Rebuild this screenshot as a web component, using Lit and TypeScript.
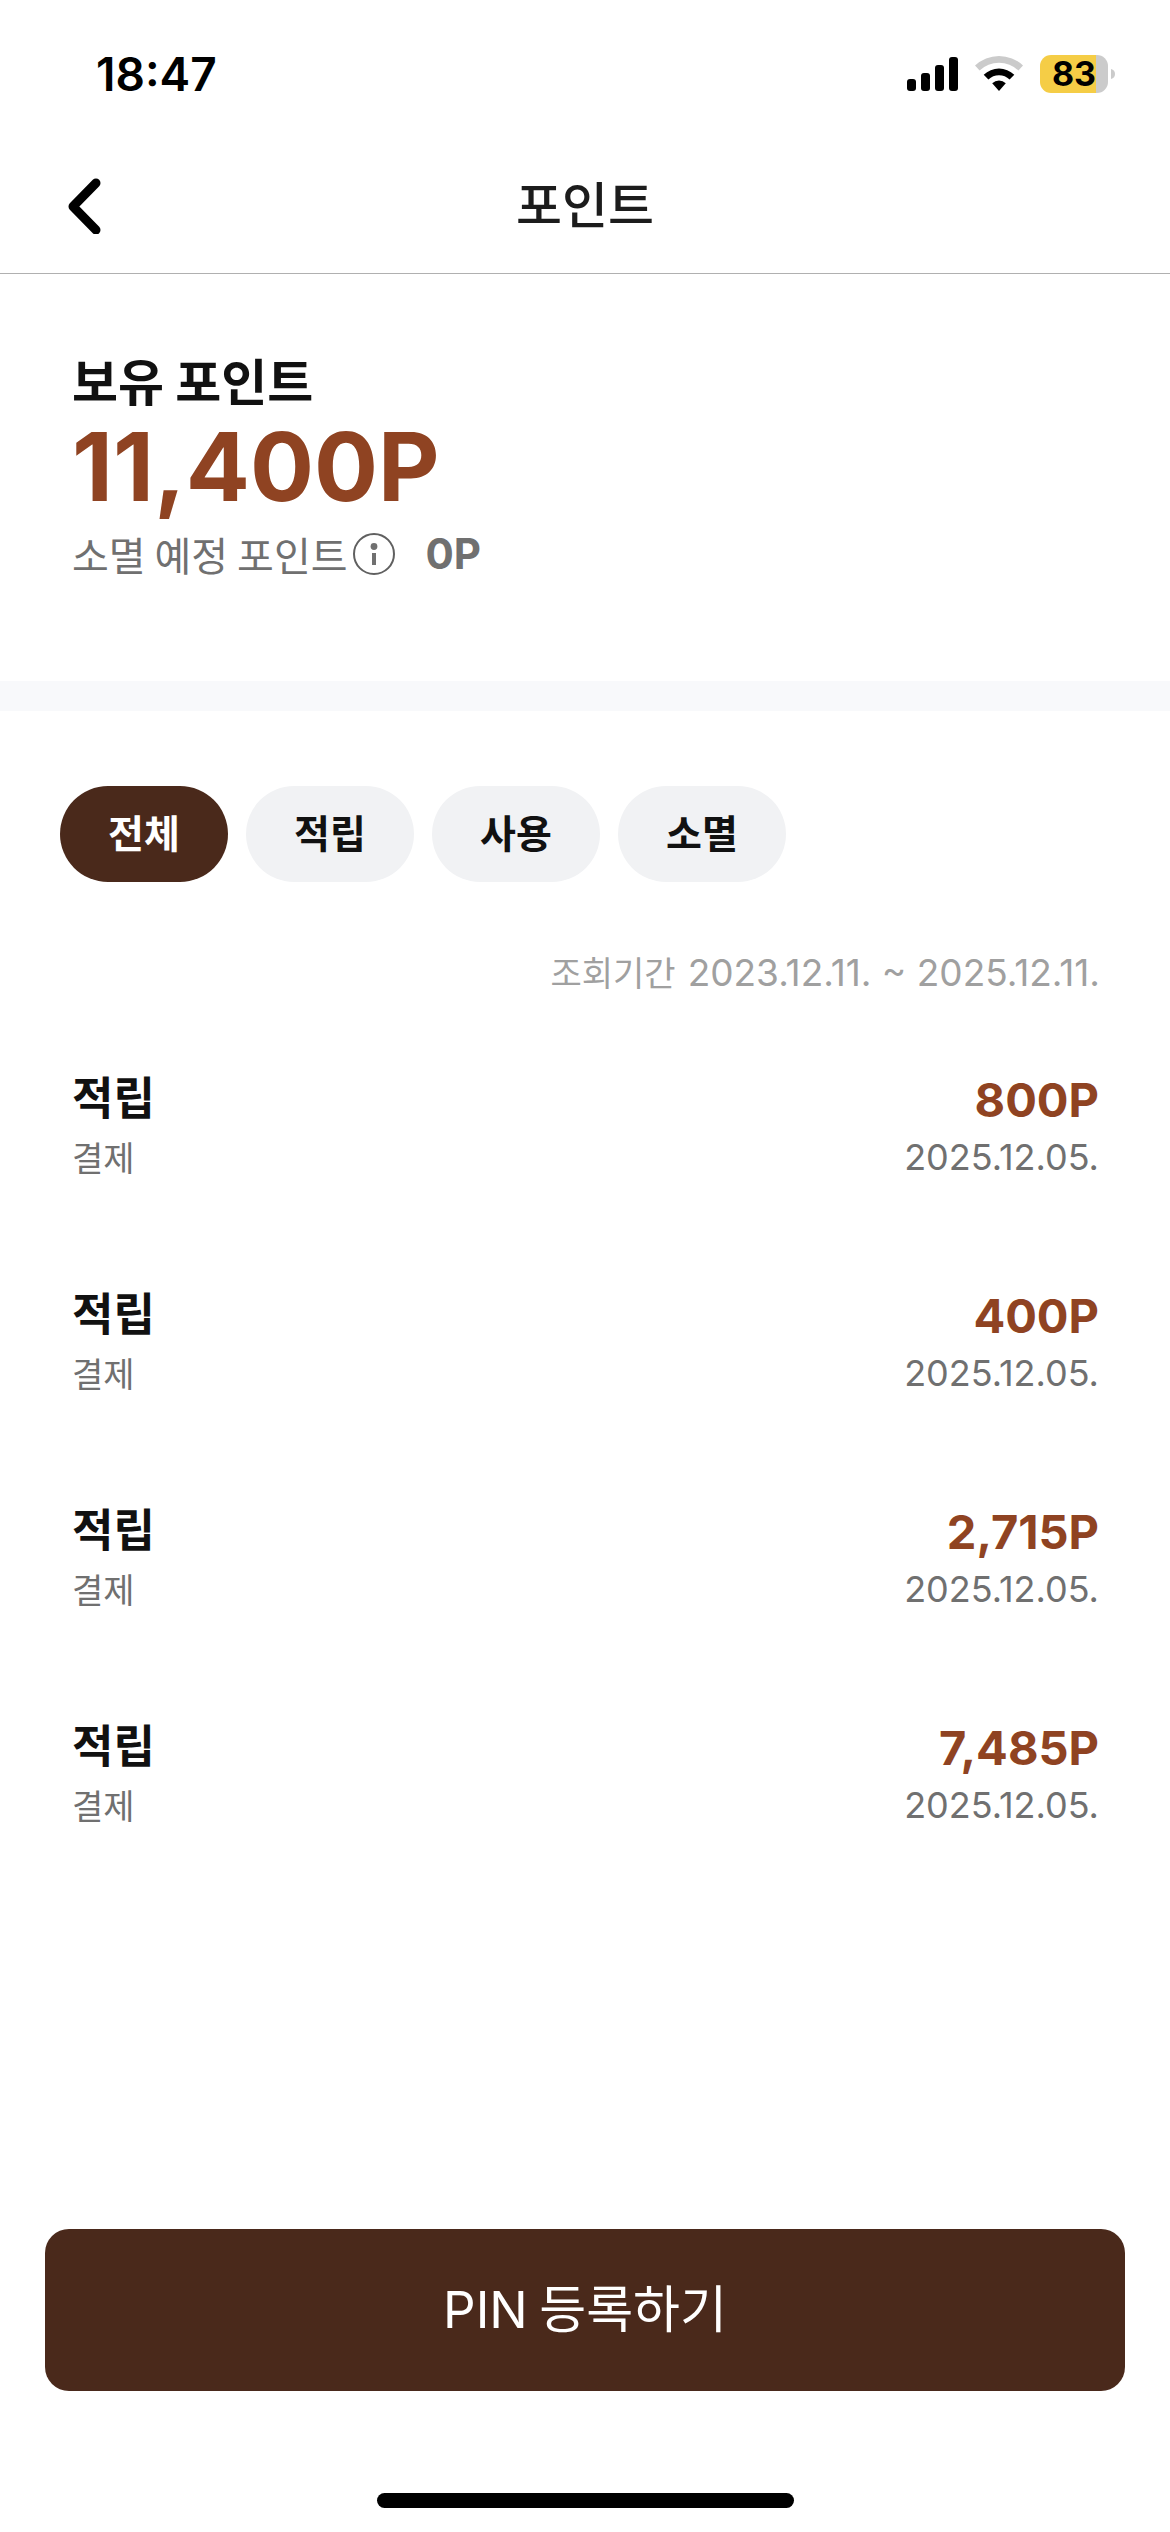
import { LitElement, html, css } from "lit";
import { customElement, state } from "lit/decorators.js";

interface Entry {
  kind: string;
  reason: string;
  amount: string;
  date: string;
}

const FILTERS = ["전체", "적립", "사용", "소멸"];

const ENTRIES: Entry[] = [
  { kind: "적립", reason: "결제", amount: "800P", date: "2025.12.05." },
  { kind: "적립", reason: "결제", amount: "400P", date: "2025.12.05." },
  { kind: "적립", reason: "결제", amount: "2,715P", date: "2025.12.05." },
  { kind: "적립", reason: "결제", amount: "7,485P", date: "2025.12.05." },
];

@customElement("status-bar")
class StatusBar extends LitElement {
  static styles = css`
    :host {
      display: flex;
      align-items: center;
      justify-content: space-between;
      box-sizing: border-box;
      height: 138px;
      padding: 10px 54px 0 96px;
      color: #000;
      font-family: Inter, "Liberation Sans", sans-serif;
    }
    .time {
      font-size: 46px;
      line-height: 56px;
      font-weight: 600;
    }
    .icons {
      display: flex;
      align-items: center;
      gap: 17px;
    }
    .icon {
      display: block;
    }
    .battery {
      display: flex;
      align-items: center;
      gap: 3px;
    }
    .cell {
      display: flex;
      align-items: center;
      justify-content: center;
      width: 68px;
      height: 38px;
      border-radius: 11px;
      background: linear-gradient(to right, #f5cd46 56px, #cbcbcb 56px);
      font-size: 34px;
      line-height: 38px;
      font-weight: 700;
    }
  `;

  render() {
    return html`
      <span class="time">18:47</span>
      <div class="icons">
        <svg class="icon" width="51" height="38" viewBox="0 0 51 38" aria-hidden="true">
          <rect x="0" y="24" width="9" height="12" rx="3" />
          <rect x="14" y="18" width="9" height="18" rx="3" />
          <rect x="28" y="10" width="9" height="26" rx="3" />
          <rect x="42" y="2" width="9" height="34" rx="3" />
        </svg>
        <svg class="icon" width="48" height="38" viewBox="0 0 48 38" aria-hidden="true">
          <path d="M0 10.6 A34.5 34.5 0 0 1 48 10.6 L43.4 15.6 A28 28 0 0 0 4.6 15.6 Z" fill="#cbcbcb" />
          <path d="M8.7 19.8 A22 22 0 0 1 39.3 19.8 L34.6 24.6 A15.4 15.4 0 0 0 13.4 24.6 Z" />
          <path d="M17.2 28.2 A10 10 0 0 1 30.8 28.2 L24 36 Z" />
        </svg>
        <div class="battery">
          <span class="cell">83</span>
          <svg class="icon" width="5" height="12" viewBox="0 0 5 12" aria-hidden="true">
            <path d="M0 1 Q4 2 4 6 Q4 10 0 11 Z" fill="#cbcbcb" />
          </svg>
        </div>
      </div>
    `;
  }
}

@customElement("app-root")
class AppRoot extends LitElement {
  @state() private selected = FILTERS[0];

  static styles = css`
    :host {
      display: flex;
      flex-direction: column;
      min-height: 100vh;
      background: #fff;
      color: #111;
      font-family: "Noto Sans CJK KR", sans-serif;
    }
    button {
      margin: 0;
      padding: 0;
      border: 0;
      background: none;
      color: inherit;
      font: inherit;
      cursor: pointer;
    }
    h1,
    h2,
    p,
    ul {
      margin: 0;
      padding: 0;
    }
    .num {
      font-family: Inter, "Liberation Sans", sans-serif;
    }
    .header {
      display: grid;
      grid-template-columns: 120px 1fr 120px;
      align-items: center;
      box-sizing: border-box;
      height: 136px;
      border-bottom: 1px solid #b0b0b0;
    }
    .back {
      display: flex;
      align-items: center;
      height: 100px;
      padding-left: 66px;
    }
    .header .title {
      padding-bottom: 8px;
      text-align: center;
      font-size: 50px;
      line-height: 72px;
      font-weight: 500;
      color: #1c1c1c;
    }
    .summary {
      padding: 69px 72px 92px;
    }
    .label {
      font-size: 50px;
      line-height: 72px;
      font-weight: 600;
    }
    .total {
      font-size: 95px;
      line-height: 104px;
      font-weight: 700;
      color: #8f4322;
    }
    .expiring {
      display: flex;
      align-items: center;
      font-size: 40px;
      line-height: 70px;
      color: #707070;
    }
    .info {
      display: flex;
      margin-left: 4px;
    }
    .expiring-amount {
      margin-left: 30px;
      font-size: 42px;
      font-weight: 700;
    }
    .band {
      height: 30px;
      background: #f8f9fb;
    }
    .filters {
      display: flex;
      gap: 18px;
      padding: 75px 60px 0;
    }
    .filters .chip {
      box-sizing: border-box;
      min-width: 168px;
      padding: 0 48px 6px;
      border-radius: 48px;
      background: #f1f2f4;
      font-size: 39px;
      line-height: 90px;
      font-weight: 600;
    }
    .filters .chip[aria-pressed="true"] {
      background: #4a291b;
      color: #fff;
    }
    .period {
      display: flex;
      justify-content: flex-end;
      align-items: baseline;
      gap: 12px;
      padding: 64px 70px 0;
      font-size: 34px;
      line-height: 52px;
      color: #a0a0a0;
    }
    .period .num {
      font-size: 37px;
    }
    .entries {
      list-style: none;
      padding: 70px 71px 0 72px;
    }
    .entry {
      display: flex;
      justify-content: space-between;
      height: 216px;
    }
    .side {
      display: flex;
      flex-direction: column;
    }
    .start {
      gap: 8px;
    }
    .end {
      align-items: flex-end;
    }
    .kind {
      font-size: 45px;
      line-height: 54px;
      font-weight: 700;
    }
    .amount {
      font-size: 47px;
      line-height: 62px;
      font-weight: 700;
      color: #8f4322;
    }
    .reason {
      font-size: 34px;
      line-height: 52px;
      color: #707070;
    }
    .date {
      font-size: 36px;
      line-height: 52px;
      color: #707070;
    }
    .footer {
      display: flex;
      flex-direction: column;
      align-items: center;
      margin-top: auto;
      padding: 0 45px 24px;
    }
    .footer .register {
      box-sizing: border-box;
      align-self: stretch;
      height: 162px;
      padding-bottom: 8px;
      border-radius: 24px;
      background: #4a291b;
      color: #fff;
      font-size: 51px;
    }
    .home {
      width: 417px;
      height: 15px;
      margin-top: 102px;
      border-radius: 8px;
      background: #000;
    }
  `;

  private renderEntry(entry: Entry) {
    return html`
      <li class="entry">
        <div class="side start">
          <span class="kind">${entry.kind}</span>
          <span class="reason">${entry.reason}</span>
        </div>
        <div class="side end">
          <span class="amount num">${entry.amount}</span>
          <span class="date num">${entry.date}</span>
        </div>
      </li>
    `;
  }

  render() {
    return html`
      <status-bar></status-bar>
      <header class="header">
        <button class="back" type="button" aria-label="뒤로">
          <svg width="36" height="56" viewBox="0 0 36 56" fill="none" stroke="#000" stroke-width="9" stroke-linecap="round" stroke-linejoin="round" aria-hidden="true">
            <path d="M30 5 L7 28.5 L30 52" />
          </svg>
        </button>
        <h1 class="title">포인트</h1>
      </header>
      <main>
        <section class="summary">
          <h2 class="label">보유 포인트</h2>
          <p class="total num">11,400P</p>
          <p class="expiring">
            <span>소멸 예정 포인트</span>
            <button class="info" type="button" aria-label="안내">
              <svg width="44" height="44" viewBox="0 0 44 44" aria-hidden="true">
                <circle cx="22" cy="22" r="20" fill="none" stroke="#606060" stroke-width="2" />
                <circle cx="22" cy="14.5" r="3.4" fill="#707070" />
                <rect x="20" y="21" width="4" height="12" fill="#707070" />
              </svg>
            </button>
            <span class="expiring-amount num">0P</span>
          </p>
        </section>
        <div class="band"></div>
        <nav class="filters">
          ${FILTERS.map(
            (name) => html`
              <button
                class="chip"
                type="button"
                aria-pressed=${name === this.selected ? "true" : "false"}
                @click=${() => (this.selected = name)}
              >${name}</button>
            `,
          )}
        </nav>
        <p class="period">
          <span>조회기간</span>
          <span class="num">2023.12.11. ~ 2025.12.11.</span>
        </p>
        <ul class="entries">
          ${ENTRIES.map((entry) => this.renderEntry(entry))}
        </ul>
      </main>
      <footer class="footer">
        <button class="register" type="button"><span class="num">PIN</span> 등록하기</button>
        <div class="home"></div>
      </footer>
    `;
  }
}
